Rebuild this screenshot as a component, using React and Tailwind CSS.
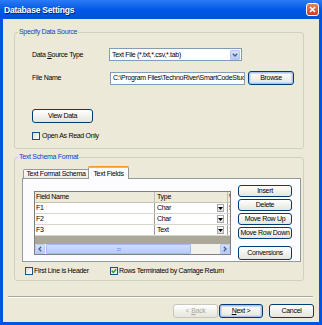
import React from "react";

function Btn({ children, className = "", def = false, disabled = false }) {
  return (
    <div
      className={
        "flex items-center justify-center rounded-[3px] border bg-linear-to-b from-white to-[#E6E5DD] whitespace-nowrap " +
        (disabled ? "border-[#C9C7BA] text-[#ACA899] " : "border-[#003C74] text-black ") +
        (def ? "shadow-[inset_0_0_0_1px_#A9C2F4,inset_0_0_0_2px_#CEDCF8] " : "") +
        className
      }
    >
      {children}
    </div>
  );
}

function Check({ checked = false }) {
  return (
    <div className="w-[8px] h-[8px] border border-[#1C5180] bg-linear-to-br from-[#DCDCD7] to-white flex items-center justify-center shrink-0">
      {checked && (
        <svg width="6" height="6" viewBox="0 0 6 6">
          <path d="M0.8 2.8 L2.3 4.4 L5.2 1.2" stroke="#21A121" strokeWidth="1.4" fill="none" />
        </svg>
      )}
    </div>
  );
}

function DropBtn() {
  return (
    <div className="w-[7px] h-[8px] border border-[#A7A6AA] bg-linear-to-b from-white to-[#E2E1D8] flex items-center justify-center shrink-0">
      <svg width="5" height="3" viewBox="0 0 5 3">
        <path d="M0 0 H5 L2.5 3 Z" fill="#000" />
      </svg>
    </div>
  );
}

function Row({ name, type, w }) {
  return (
    <div className="flex h-[11px] bg-white border-b border-[#D8D7CC]">
      <div className="w-[120px] border-r border-[#A0A0A0] pl-[1px] flex items-center">{name}</div>
      <div className="w-[73px] border-r border-[#A0A0A0] pl-[2px] pr-[3px] flex items-center justify-between">
        <span>{type}</span>
        <DropBtn />
      </div>
      <div className="flex-1 overflow-hidden pl-[1px] flex items-center">{w}</div>
    </div>
  );
}

export default function App() {
  return (
    <div className="w-[322px] h-[325px] bg-[#0054E3] flex flex-col font-['Liberation_Sans',Arial,sans-serif] text-[7px] leading-[8px] tracking-[-0.3px] text-black overflow-hidden">
      {/* Title bar */}
      <div className="h-[19px] shrink-0 flex items-center justify-between pl-[4px] pr-[3px] bg-linear-to-b from-[#2B7BF5] via-[#0058E6] to-[#0050D8]">
        <span className="text-white font-bold text-[8.5px] tracking-[-0.2px] [text-shadow:1px_1px_0_#0A1E6A]">
          Database Settings
        </span>
        <div className="w-[13px] h-[13px] rounded-[3px] border border-white bg-linear-to-b from-[#E8805F] to-[#C8401A] flex items-center justify-center">
          <svg width="7" height="7" viewBox="0 0 7 7">
            <path d="M1 1 L6 6 M6 1 L1 6" stroke="white" strokeWidth="1.6" />
          </svg>
        </div>
      </div>

      {/* Body */}
      <div className="flex-1 mx-[3px] mb-[3px] bg-[#ECE9D8] flex flex-col">
        {/* Group 1 */}
        <fieldset className="ml-[11px] mt-[9px] w-[290px] h-[121px] border border-[#D0D0BF] rounded-[3px] p-0 m-0">
          <legend className="ml-[3px] px-[1px] text-[#0046D5]">Specify Data Source</legend>
          <div className="pl-[17px] flex flex-col">
            <div className="mt-[12px] h-[13px] flex items-center">
              <div className="w-[77px]">
                Data <span className="underline">S</span>ource Type
              </div>
              <div className="w-[133px] h-[13px] border border-[#7F9DB9] bg-white flex items-center pl-[2px] pr-[1px]">
                <span className="flex-1 whitespace-nowrap overflow-hidden">Text File (*.txt,*.csv,*.tab)</span>
                <div className="w-[10px] h-[10px] rounded-[1px] border border-[#B4C6F2] bg-linear-to-b from-[#D6E2FD] to-[#B5C9F7] flex items-center justify-center">
                  <svg width="6" height="4" viewBox="0 0 6 4">
                    <path d="M0.8 0.8 L3 3 L5.2 0.8" stroke="#4D6185" strokeWidth="1.4" fill="none" />
                  </svg>
                </div>
              </div>
            </div>
            <div className="mt-[10px] h-[14px] flex items-center">
              <div className="w-[78px]">File Name</div>
              <div className="w-[135px] h-[13px] border border-[#7F9DB9] bg-white flex items-center pl-[2px] overflow-hidden whitespace-nowrap">
                {"C:\\Program Files\\TechnoRiver\\SmartCodeStudio"}
              </div>
              <Btn className="ml-[3px] w-[46px] h-[14px]" def>
                Browse
              </Btn>
            </div>
            <Btn className="mt-[24px] w-[61px] h-[14px]">View Data</Btn>
            <div className="mt-[8px] h-[10px] flex items-center">
              <Check />
              <span className="ml-[2px]">Open As Read Only</span>
            </div>
          </div>
        </fieldset>

        {/* Group 2 */}
        <fieldset className="ml-[11px] mt-[4px] w-[290px] h-[128px] border border-[#D0D0BF] rounded-[3px] p-0 m-0">
          <legend className="ml-[3px] px-[1px] text-[#0046D5]">Text Schema Format</legend>
          <div className="flex flex-col">
            {/* tabs */}
            <div className="mt-[5px] ml-[8px] h-[12px] flex items-end">
              <div className="w-[66px] h-[9px] border border-b-0 border-[#919B9C] rounded-t-[2px] bg-linear-to-b from-white to-[#ECEBE6] flex items-center justify-center whitespace-nowrap">
                Text Format Schema
              </div>
              <div className="relative z-10 -ml-[1px] -mb-[1px] w-[41px] h-[13px] border-x border-[#919B9C] rounded-t-[2px] bg-[#FCFCFE] flex flex-col">
                <div className="h-[2px] -mx-[1px] rounded-t-[2px] bg-linear-to-b from-[#E68B2C] to-[#FFC73C]" />
                <div className="flex-1 flex items-center justify-center whitespace-nowrap">Text Fields</div>
              </div>
            </div>
            {/* panel */}
            <div className="ml-[7px] w-[279px] h-[84px] border border-[#919B9C] bg-[#FCFCFE] flex items-start pl-[11px] pt-[6px]">
              {/* grid */}
              <div className="mt-[6px] w-[197px] h-[64px] border border-[#808080] bg-[#ACA899] flex flex-col">
                <div className="flex h-[11px] bg-[#EBEADB] border-b border-[#C7C5B2]">
                  <div className="w-[120px] border-r border-[#C0BFB0] pl-[1px] flex items-center">Field Name</div>
                  <div className="w-[73px] border-r border-[#C0BFB0] pl-[2px] flex items-center">Type</div>
                  <div className="flex-1 overflow-hidden pl-[1px] flex items-center">Width</div>
                </div>
                <Row name="F1" type="Char" w="50" />
                <Row name="F2" type="Char" w="10" />
                <Row name="F3" type="Text" w="10" />
                <div className="flex-1" />
                {/* scrollbar */}
                <div className="h-[10px] flex bg-[#F3F1EC]">
                  <div className="w-[10px] h-[10px] rounded-[1px] border border-[#B7CAF5] bg-linear-to-b from-[#D6E2FD] to-[#B5C9F7] flex items-center justify-center">
                    <svg width="4" height="6" viewBox="0 0 4 6">
                      <path d="M3.2 0.8 L1 3 L3.2 5.2" stroke="#4D6185" strokeWidth="1.3" fill="none" />
                    </svg>
                  </div>
                  <div className="ml-[1px] w-[145px] h-[10px] rounded-[1px] border border-[#A3BAF2] bg-linear-to-b from-[#CFDDFD] to-[#B8CCF9] flex items-center justify-center">
                    <div className="w-[4px] h-[3px] border-y border-[#8EA8EC]" />
                  </div>
                  <div className="flex-1" />
                  <div className="w-[10px] h-[10px] rounded-[1px] border border-[#B7CAF5] bg-linear-to-b from-[#D6E2FD] to-[#B5C9F7] flex items-center justify-center">
                    <svg width="4" height="6" viewBox="0 0 4 6">
                      <path d="M0.8 0.8 L3 3 L0.8 5.2" stroke="#4D6185" strokeWidth="1.3" fill="none" />
                    </svg>
                  </div>
                </div>
              </div>
              {/* side buttons */}
              <div className="ml-[7px] flex flex-col">
                <Btn className="w-[54px] h-[12px]">Insert</Btn>
                <Btn className="mt-[2px] w-[54px] h-[12px]">Delete</Btn>
                <Btn className="mt-[2px] w-[54px] h-[12px]">Move Row Up</Btn>
                <Btn className="mt-[2px] w-[54px] h-[12px]">Move Row Down</Btn>
                <Btn className="mt-[7px] w-[54px] h-[14px]">Conversions</Btn>
              </div>
            </div>
            {/* checkboxes */}
            <div className="mt-[4px] h-[10px] flex items-center">
              <div className="ml-[10px] w-[85px] flex items-center">
                <Check />
                <span className="ml-[1px]">First Line is Header</span>
              </div>
              <Check checked />
              <span className="ml-[1px]">Rows Terminated by Carriage Return</span>
            </div>
          </div>
        </fieldset>

        {/* separator */}
        <div className="mt-[15px] ml-[5px] mr-[6px] h-[2px] border-t border-[#ACA899] border-b border-b-white" />

        {/* bottom buttons */}
        <div className="mt-[6px] flex justify-end pr-[5px]">
          <Btn className="w-[45px] h-[14px]" disabled>
            &lt; <span className="underline ml-[2px]">B</span>ack
          </Btn>
          <Btn className="ml-[1px] w-[44px] h-[14px]" def>
            <span className="underline">N</span>ext &gt;
          </Btn>
          <Btn className="ml-[6px] w-[45px] h-[14px]">Cancel</Btn>
        </div>
      </div>
    </div>
  );
}
